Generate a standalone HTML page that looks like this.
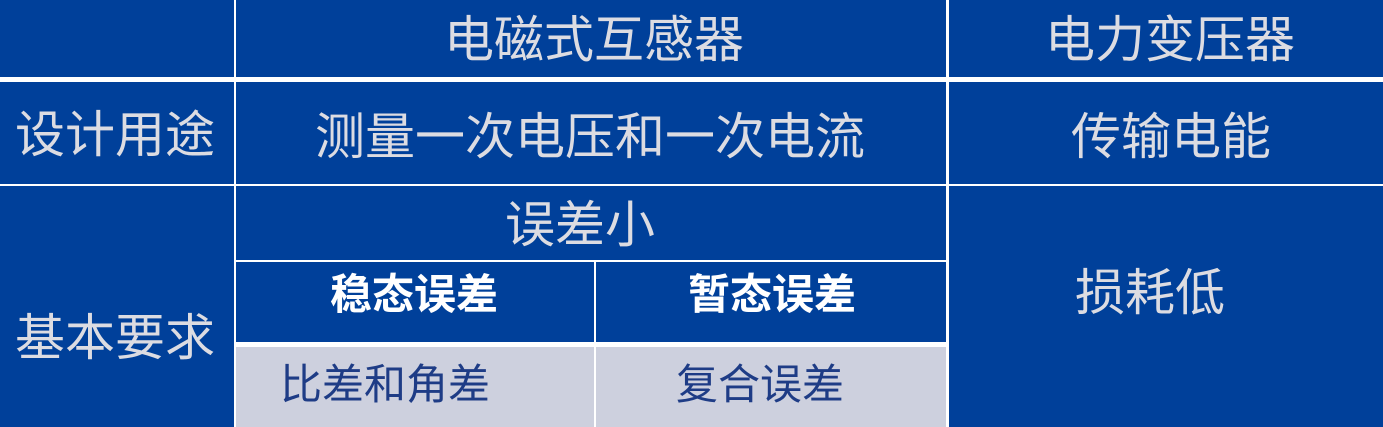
<!DOCTYPE html><html><head><meta charset="utf-8"><style>
body{margin:0;width:1383px;height:427px;background:#fff;overflow:hidden;position:relative;font-family:"Liberation Sans","Noto Sans CJK SC",sans-serif}
.c{position:absolute;background:#00409A}
.g{background:#CDD0DE}
.t{position:absolute;width:1000px;text-align:center;height:60px;line-height:60px;font-size:50px;color:#DCDCE2;white-space:nowrap}
.b{font-size:42px;color:#fff;font-weight:bold}
.d{font-size:42px;color:#1E3C86}
</style></head><body>
<div class="c" style="left:0;top:0;width:234px;height:77px"></div>
<div class="c" style="left:236px;top:0;width:710px;height:77px"></div>
<div class="c" style="left:949px;top:0;width:434px;height:77px"></div>
<div class="c" style="left:0;top:82px;width:234px;height:102px"></div>
<div class="c" style="left:236px;top:82px;width:710px;height:102px"></div>
<div class="c" style="left:949px;top:82px;width:434px;height:102px"></div>
<div class="c" style="left:0;top:186px;width:234px;height:241px"></div>
<div class="c" style="left:236px;top:186px;width:710px;height:74px"></div>
<div class="c" style="left:949px;top:186px;width:434px;height:241px"></div>
<div class="c" style="left:236px;top:262px;width:358px;height:80px"></div>
<div class="c" style="left:596px;top:262px;width:350px;height:80px"></div>
<div class="c g" style="left:236px;top:347px;width:358px;height:80px"></div>
<div class="c g" style="left:596px;top:347px;width:350px;height:80px"></div>

<div class="t" style="left:94px;top:10px">电磁式互感器</div>
<div class="t" style="left:670px;top:10px">电力变压器</div>
<div class="t" style="left:-385px;top:105px">设计用途</div>
<div class="t" style="left:90px;top:107px">测量一次电压和一次电流</div>
<div class="t" style="left:671px;top:107px">传输电能</div>
<div class="t" style="left:80px;top:195px">误差小</div>
<div class="t" style="left:650px;top:263px">损耗低</div>
<div class="t" style="left:-385px;top:308px">基本要求</div>
<div class="t b" style="left:-86px;top:265px">稳态误差</div>
<div class="t b" style="left:272px;top:265px">暂态误差</div>
<div class="t d" style="left:-115px;top:355px">比差和角差</div>
<div class="t d" style="left:260px;top:355px">复合误差</div>
</body></html>
